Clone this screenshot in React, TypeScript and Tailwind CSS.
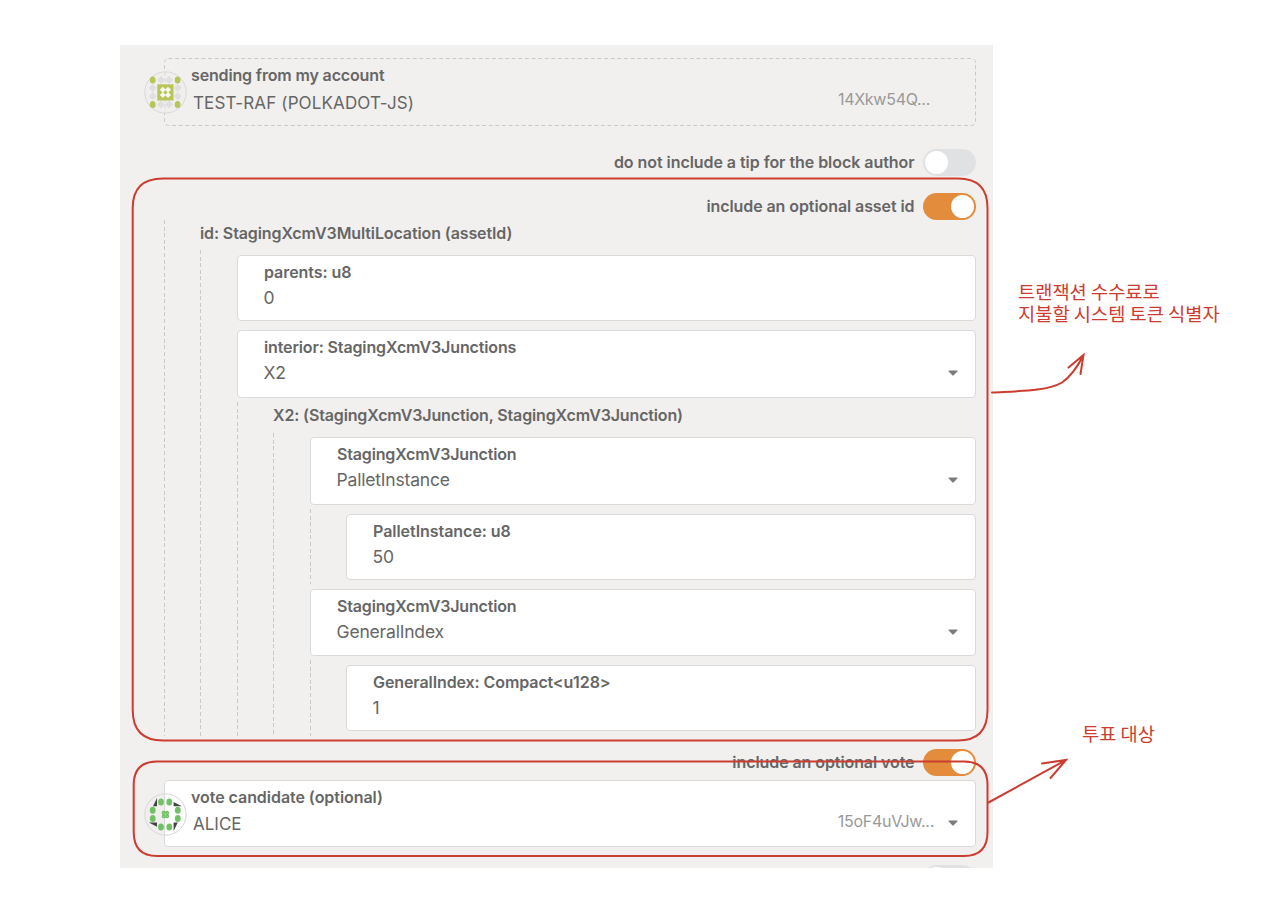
import type { ReactNode } from "react";

function Text({ children, className = "" }: { children: ReactNode; className?: string }) {
  return <span className={`block whitespace-nowrap ${className}`}>{children}</span>;
}

function Toggle({ on = false }: { on?: boolean }) {
  return (
    <span
      className={
        on
          ? "flex h-[26.5px] w-[53px] shrink-0 items-center justify-end rounded-full bg-[#e28c3c] px-[2px]"
          : "flex h-[26.5px] w-[53px] shrink-0 items-center justify-start rounded-full bg-[#dfe1e3] px-[2px]"
      }
    >
      <span className="size-[23px] rounded-full bg-white" />
    </span>
  );
}

function ToggleRow({ label, labelClass, on }: { label: string; labelClass: string; on?: boolean }) {
  return (
    <div className="flex h-[27px] items-start justify-end gap-[8.5px] pr-[17px]">
      <Text className={`pt-[2px] text-[16px] font-semibold leading-[22px] ${labelClass}`}>{label}</Text>
      <Toggle on={on} />
    </div>
  );
}

function Caret() {
  return (
    <svg className="mr-[17px] h-[6px] w-[10px]" viewBox="0 0 10 6">
      <path d="M1 .4h8q.8.3.3 1L5.7 5.2q-.7.6-1.4 0L.7 1.4Q.2.7 1 .4Z" fill="#7b7b7b" />
    </svg>
  );
}

function Field({
  label,
  value,
  labelClass = "",
  heightClass = "h-[66px]",
  select,
}: {
  label: string;
  value: string;
  labelClass?: string;
  heightClass?: string;
  select?: boolean;
}) {
  return (
    <div className={`flex items-start justify-between rounded-[4px] border border-[#dadada] bg-white pl-[26px] ${heightClass}`}>
      <div className="pt-[5px]">
        <Text className={`text-[16px] font-semibold leading-[22px] ${labelClass}`}>{label}</Text>
        <Text className="-ml-[0.5px] mt-[2px] text-[17.5px] leading-[26px] tracking-[-0.18px]">{value}</Text>
      </div>
      {select && (
        <div className="pt-[39px]">
          <Caret />
        </div>
      )}
    </div>
  );
}

function Indent({ children, className = "" }: { children: ReactNode; className?: string }) {
  return (
    <div className={`flex ${className}`}>
      <div className="w-px shrink-0 bg-[repeating-linear-gradient(to_bottom,#cbc9c7_0_4px,transparent_4px_6.6px)]" />
      <div className="min-w-0 flex-1">{children}</div>
    </div>
  );
}

function LimeIcon() {
  const dots = [[17, 9], [25, 9], [8.7, 17], [8.7, 25.3], [33.6, 17], [33.6, 25.3], [17, 33.6], [25, 33.6]];
  const corners = [[8.7, 9], [33.6, 9], [8.7, 33.6], [33.6, 33.6]];
  const holes = [[18.8, 18.8], [24, 18.8], [18.8, 24], [24, 24]];
  return (
    <svg className="size-[43px]" viewBox="0 0 43 43">
      <circle cx="21.5" cy="21.5" r="20.7" fill="#f0efed" stroke="#d9d8d6" />
      <path d="M21 1v41" stroke="#dad9d7" strokeDasharray="4 2.6" />
      {dots.map(([x, y]) => (
        <path key={`${x}-${y}`} d={`M${x} ${y - 4}l4 4-4 4-4-4z`} fill="#dfdfdf" />
      ))}
      {corners.map(([x, y]) => (
        <ellipse key={`${x}-${y}`} cx={x} cy={y} rx="2.9" ry="3.5" fill="#b9c459" />
      ))}
      <path d="M13.3 13.3h16.2v16.2H13.3z" fill="#b9c459" />
      {holes.map(([x, y]) => (
        <path key={`${x}-${y}`} d={`M${x} ${y - 3}l3 3-3 3-3-3z`} fill="#f8f9f1" />
      ))}
    </svg>
  );
}

function GreenIcon() {
  const dots = [[17, 9], [25.3, 9], [8.7, 17.3], [8.7, 25.6], [33.8, 17.3], [33.8, 25.6], [17, 33.9], [25.3, 33.9]];
  const centre = [[19.7, 19.9], [23.1, 19.9], [19.7, 23.3], [23.1, 23.3]];
  return (
    <svg className="size-[43px]" viewBox="0 0 43 43">
      <circle cx="21.5" cy="21.5" r="20.7" fill="#f0efed" />
      <path d="M21 1a20.5 20.5 0 0 1 0 41z" fill="#fff" />
      <path d="M20.5 1v41" stroke="#dadada" />
      <circle cx="21.5" cy="21.5" r="20.7" fill="none" stroke="#d9d8d6" />
      <path d="M13 5v8.3H9zM29.6 9l8.2 4.3h-8.2zM4.8 29.6H13v4.1zM29.6 29.6h4.2l-4.2 8.3z" fill="#444" />
      {dots.map(([x, y]) => (
        <ellipse key={`${x}-${y}`} cx={x} cy={y} rx="2.9" ry="3.5" fill="#70c164" />
      ))}
      {centre.map(([x, y]) => (
        <circle key={`${x}-${y}`} cx={x} cy={y} r="1.3" fill="#b9dfb3" stroke="#70c164" strokeWidth="1.5" />
      ))}
    </svg>
  );
}

function Annotations() {
  return (
    <>
      <svg className="pointer-events-none absolute inset-0 h-[918px] w-[1278px]" viewBox="0 0 1278 918" fill="none" stroke="#cb3d30" strokeWidth="2" strokeLinecap="round">
        <path d="M163 178.5H958Q987.500 178.500 987.500 208V710Q987.500 740.500 958 740.500H163Q132.700 740.500 132.700 710V208Q132.700 178.500 163 178.500Z" />
        <path d="M157 761.500H964Q987.500 761.500 987.500 785V832Q987.500 856 964 856H157Q133.700 856 133.700 832V785Q133.700 761.500 157 761.500Z" />
        <path d="M992 392.500C1020 391 1048 391 1062 382.500C1073 375 1079 364 1083.500 355M1068.500 367.500L1083.500 355L1080.500 374" />
        <path d="M988.500 802.500L1066 760M1042 763.500L1066 760L1050.500 778" />
      </svg>
      <div className="absolute left-[1018px] top-[280px] font-['Noto_Sans_CJK_KR',sans-serif] text-[18.7px] leading-[22px] text-[#cb3d30]">
        <Text>트랜잭션 수수료로</Text>
        <Text>지불할 시스템 토큰 식별자</Text>
      </div>
      <Text className="absolute left-[1082px] top-[722px] font-['Noto_Sans_CJK_KR',sans-serif] text-[18.7px] leading-[22px] text-[#cb3d30]">
        투표 대상
      </Text>
    </>
  );
}

export default function App() {
  return (
    <main className="relative h-[918px] w-[1278px] overflow-hidden bg-white pl-[120px] pt-[45px] font-['Inter',sans-serif] text-[#666]">
      <section className="h-[823px] w-[873px] overflow-hidden bg-[#f2f0ee] pt-[13px]">
        <div className="relative ml-[44px] mr-[17px] flex h-[68px] justify-between">
          <svg className="absolute inset-0 h-[68px] w-[812px]" fill="none">
            <rect x=".5" y=".5" width="811" height="67" rx="4" stroke="#cbc9c7" strokeDasharray="4 2.6" />
          </svg>
          <div className="absolute left-[-20.5px] top-[13px]"><LimeIcon /></div>
          <div className="pl-[27px] pt-[6px]">
            <Text className="text-[16px] font-semibold leading-[22px] tracking-[-0.15px]">sending from my account</Text>
            <Text className="ml-[2px] mt-[4px] text-[17px] leading-[26px] tracking-[0.13px]">TEST-RAF (POLKADOT-JS)</Text>
          </div>
          <Text className="pr-[46px] pt-[30px] text-[16px] leading-[22px] tracking-[-0.27px] text-[#999]">14Xkw54Q...</Text>
        </div>

        <div className="mt-[23px]">
          <ToggleRow label="do not include a tip for the block author" labelClass="tracking-[-0.05px]" />
        </div>
        <div className="mt-[17px]">
          <ToggleRow label="include an optional asset id" labelClass="tracking-[-0.08px]" on />
        </div>

        <Indent className="ml-[44px] mr-[17px] h-[516px]">
          <Text className="ml-[35px] h-[30px] pt-[2px] text-[16px] font-semibold leading-[22px] tracking-[-0.11px]">
            id: StagingXcmV3MultiLocation (assetId)
          </Text>
          <Indent className="ml-[35px] h-[486px]">
            <div className="ml-[36px] flex flex-col pt-[5px]">
              <Field label="parents: u8" value="0" labelClass="tracking-[-0.05px]" />
              <div className="h-[9px]" />
              <Field label="interior: StagingXcmV3Junctions" value="X2" labelClass="tracking-[-0.13px]" heightClass="h-[68px]" select />
            </div>
            <Indent className="ml-[36px] mt-[4px] h-[334px]">
              <Text className="ml-[35px] h-[31px] pt-[2px] text-[16px] font-semibold leading-[22px] tracking-[-0.14px]">
                X2: (StagingXcmV3Junction, StagingXcmV3Junction)
              </Text>
              <Indent className="ml-[35px] h-[303px]">
                <div className="ml-[36px] pt-[4px]">
                  <Field label="StagingXcmV3Junction" value="PalletInstance" labelClass="tracking-[-0.16px]" heightClass="h-[68px]" select />
                  <Indent className="mt-[4px] h-[75px]">
                    <div className="ml-[35px] pt-[5px]">
                      <Field label="PalletInstance: u8" value="50" labelClass="tracking-[-0.04px]" />
                    </div>
                  </Indent>
                  <div className="h-[5px]" />
                  <Field label="StagingXcmV3Junction" value="GeneralIndex" labelClass="tracking-[-0.16px]" heightClass="h-[67px]" select />
                  <Indent className="mt-[4px] h-[76px]">
                    <div className="ml-[35px] pt-[5px]">
                      <Field label="GeneralIndex: Compact<u128>" value="1" labelClass="tracking-[-0.09px]" />
                    </div>
                  </Indent>
                </div>
              </Indent>
            </Indent>
          </Indent>
        </Indent>

        <div className="mt-[13px]">
          <ToggleRow label="include an optional vote" labelClass="tracking-[-0.08px]" on />
        </div>
        <div className="relative ml-[44px] mr-[17px] mt-[4px] flex h-[67px] justify-between rounded-[4px] border border-[#dadada] bg-white">
          <div className="absolute left-[-21.5px] top-[11.5px]"><GreenIcon /></div>
          <div className="pl-[26px] pt-[5px]">
            <Text className="text-[16px] font-semibold leading-[22px] tracking-[-0.05px]">vote candidate (optional)</Text>
            <Text className="ml-[2px] mt-[3px] text-[17px] leading-[26px]">ALICE</Text>
          </div>
          <div className="flex pt-[29px]">
            <Text className="pr-[14px] text-[16px] leading-[22px] tracking-[-0.27px] text-[#999]">15oF4uVJw...</Text>
            <div className="pt-[10px]"><Caret /></div>
          </div>
        </div>
        <div className="mt-[18px]">
          <ToggleRow label="" labelClass="" />
        </div>
      </section>
      <Annotations />
    </main>
  );
}
